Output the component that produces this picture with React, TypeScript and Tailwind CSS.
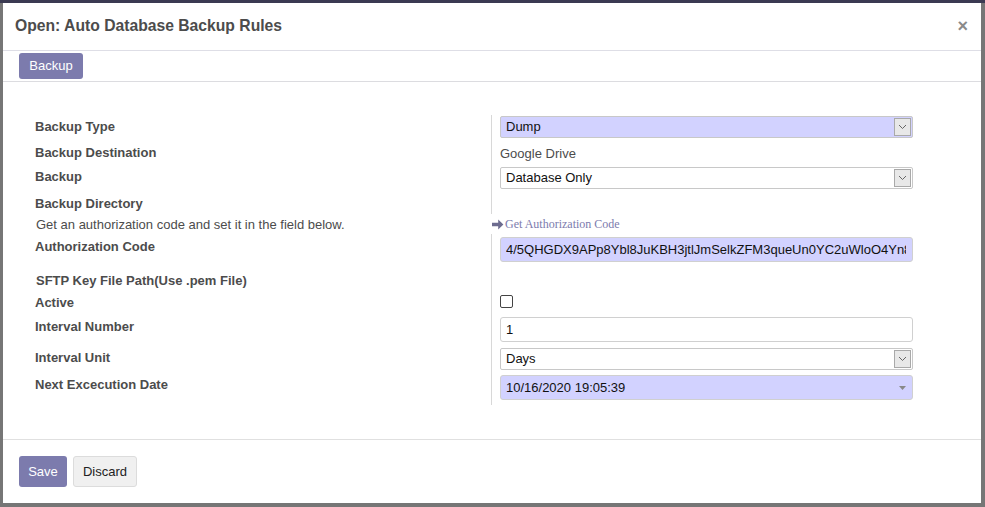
import React from "react";

const font = "font-['Liberation_Sans',Arial,Helvetica,sans-serif]";

function Chevron() {
  return (
    <svg width="9" height="6" viewBox="0 0 9 6" fill="none">
      <path d="M1 1l3.5 3.5L8 1" stroke="#666" strokeWidth="1" />
    </svg>
  );
}

function Select({ value, highlight }: { value: string; highlight?: boolean }) {
  return (
    <div
      className={`flex h-[22px] w-[413px] items-center justify-between rounded-[2px] border border-[#c8c8c8] pl-[5px] pr-[1px] text-[13px] text-[#111] ${
        highlight ? "bg-[#d2d2ff]" : "bg-white"
      }`}
    >
      <span>{value}</span>
      <div className="flex h-[18px] w-[17px] items-center justify-center border border-[#a9a9a9] bg-[#e8e8e8]">
        <Chevron />
      </div>
    </div>
  );
}

function Input({ value, highlight, caret }: { value: string; highlight?: boolean; caret?: boolean }) {
  return (
    <div
      className={`flex h-[25px] w-[413px] items-center rounded-[3px] border border-[#d0d0d0] pl-[5px] pr-[6px] ${
        highlight ? "bg-[#d2d2ff]" : "bg-white"
      }`}
    >
      <input
        readOnly
        value={value}
        className={`min-w-0 flex-1 bg-transparent text-[13px] text-[#111] outline-none ${font}`}
      />
      {caret && (
        <svg width="7" height="4" viewBox="0 0 7 4" className="shrink-0">
          <path d="M0 0h7L3.5 4z" fill="#888" />
        </svg>
      )}
    </div>
  );
}

type Row = {
  label: React.ReactNode;
  h: string;
  lpt: string;
  rpt?: string;
  value?: React.ReactNode;
  noSep?: boolean;
};

const rows: Row[] = [
  { label: "Backup Type", h: "h-[25px]", lpt: "pt-[4px]", rpt: "pt-[1px]", value: <Select value="Dump" highlight /> },
  {
    label: "Backup Destination",
    h: "h-[24px]",
    lpt: "pt-[5px]",
    rpt: "pt-[1px]",
    value: <span className="text-[13px] leading-[16px] text-[#4c4c4c]">Google Drive</span>,
  },
  { label: "Backup", h: "h-[27px]", lpt: "pt-[5px]", rpt: "pt-[3px]", value: <Select value="Database Only" /> },
  { label: "Backup Directory", h: "h-[23px]", lpt: "pt-[5px]" },
  {
    label: (
      <span className="pl-[1px] font-normal">Get an authorization code and set it in the field below.</span>
    ),
    h: "h-[20px]",
    lpt: "pt-[3px]",
    rpt: "pt-[2px]",
    noSep: true,
    value: (
      <span className="-ml-[8px] flex items-center gap-[1px] font-['Liberation_Serif','Times_New_Roman',serif] text-[12px] leading-[16px] text-[#7c7bad]">
        <svg width="12" height="11" viewBox="0 0 12 11">
          <path d="M0 3.8h6.2V0.6L11.4 5.5 6.2 10.4V7.2H0z" fill="#6d6c8f" />
        </svg>
        Get Authorization Code
      </span>
    ),
  },
  {
    label: "Authorization Code",
    h: "h-[31px]",
    lpt: "pt-[5px]",
    rpt: "pt-[3px]",
    value: <Input value="4/5QHGDX9APp8Ybl8JuKBH3jtlJmSelkZFM3queUn0YC2uWloO4Yn8fQzXkTs" highlight />,
  },
  { label: <span className="pl-[1px]">SFTP Key File Path(Use .pem File)</span>, h: "h-[26px]", lpt: "pt-[8px]" },
  {
    label: "Active",
    h: "h-[23px]",
    lpt: "pt-[4px]",
    rpt: "pt-[4px]",
    value: <div className="h-[13px] w-[13px] rounded-[2px] border border-[#444] bg-white" />,
  },
  { label: "Interval Number", h: "h-[31px]", lpt: "pt-[5px]", rpt: "pt-[3px]", value: <Input value="1" /> },
  { label: "Interval Unit", h: "h-[27px]", lpt: "pt-[5px]", rpt: "pt-[3px]", value: <Select value="Days" /> },
  {
    label: "Next Excecution Date",
    h: "h-[33px]",
    lpt: "pt-[5px]",
    rpt: "pt-[3px]",
    value: <Input value="10/16/2020 19:05:39" highlight caret />,
  },
];

export default function App() {
  return (
    <div className={`h-[507px] w-full border-t-[3px] border-[#3b3a52] bg-[#767676] pl-[3px] ${font}`}>
      <div className="flex h-[500px] w-[978px] flex-col bg-white">
        {/* header */}
        <div className="flex h-[48px] items-start justify-between border-b border-[#dedee6] pl-[12px] pr-[13px] pt-[12px]">
          <h4 className="text-[15.7px] font-bold leading-[22px] text-[#4c4c4c]">Open: Auto Database Backup Rules</h4>
          <span className="text-[18px] font-bold leading-[22px] text-[#8a8a8a]">×</span>
        </div>

        {/* button bar */}
        <div className="h-[31px] border-b border-[#dcdce0] pl-[16px] pt-[2px]">
          <button className="h-[26px] w-[64px] rounded-[3px] bg-[#7c7bad] text-[13px] text-white">Backup</button>
        </div>

        {/* form */}
        <div className="flex-1 pl-[32px] pt-[33px]">
          {rows.map((r, i) => (
            <div key={i} className={`flex ${r.h}`}>
              <div className={`w-[456px] text-[13px] font-bold leading-[16px] text-[#4c4c4c] ${r.lpt}`}>{r.label}</div>
              <div className={`pl-[8px] ${r.rpt ?? ""} ${r.noSep ? "border-l border-transparent" : "border-l border-[#d8d8d8]"}`}>
                {r.value}
              </div>
            </div>
          ))}
        </div>

        {/* footer */}
        <div className="flex h-[64px] gap-[6px] border-t border-[#e0e0e0] pl-[16px] pt-[16px]">
          <button className="h-[31px] w-[48px] rounded-[3px] bg-[#7c7bad] text-[13px] text-white">Save</button>
          <button className="h-[31px] w-[64px] rounded-[3px] border border-[#dcdcdc] bg-[#f0f0f0] text-[13px] text-[#222]">
            Discard
          </button>
        </div>
      </div>
    </div>
  );
}
